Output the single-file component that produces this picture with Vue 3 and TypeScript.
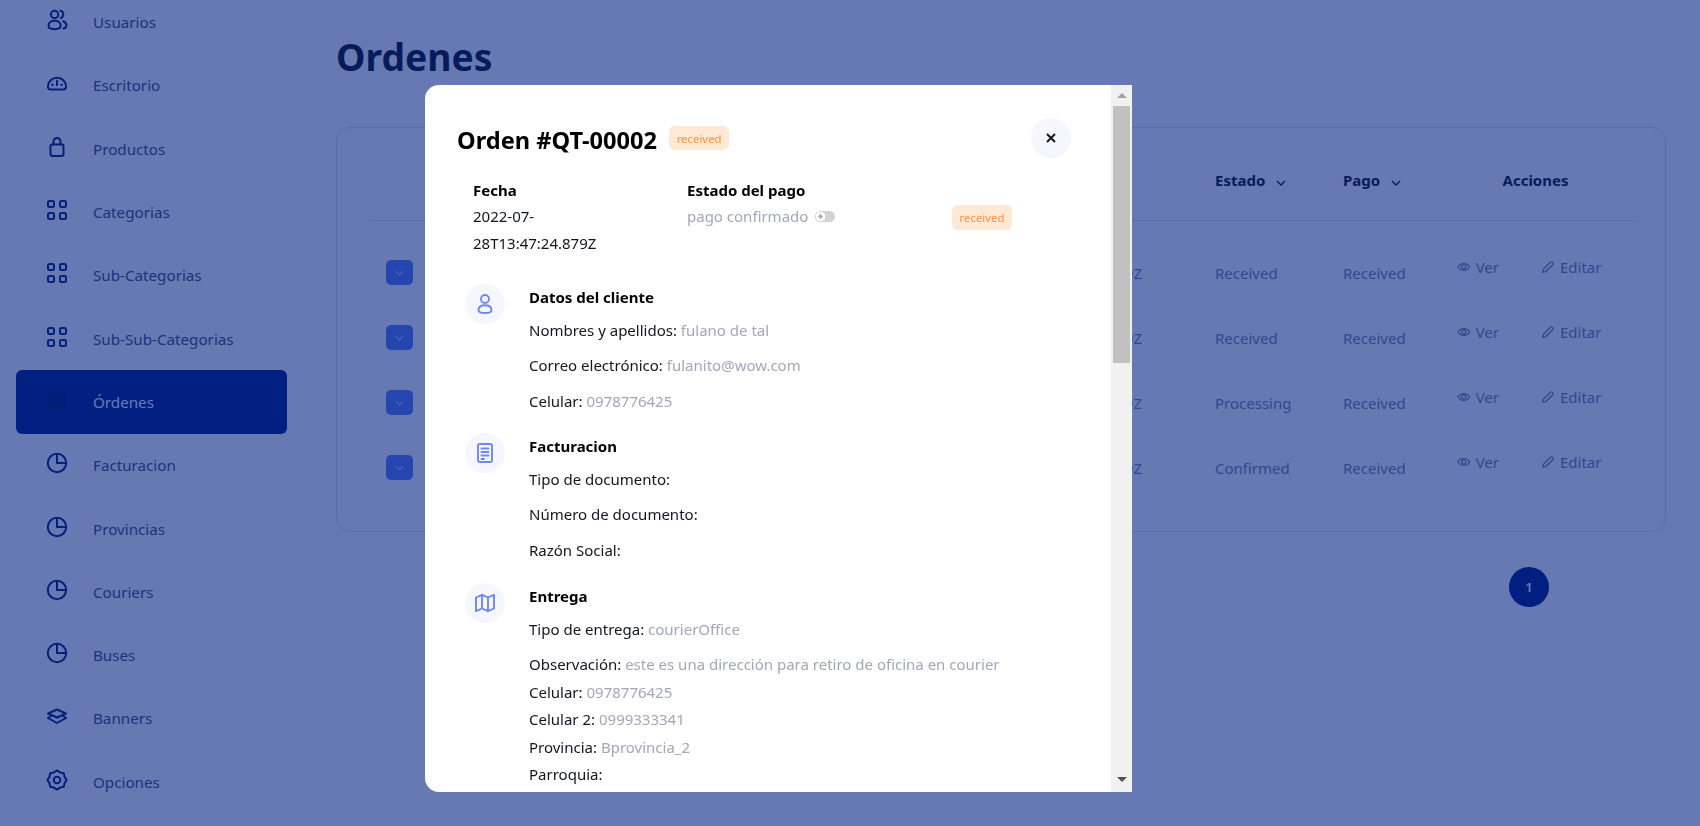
<script setup lang="ts">
const gear = (() => {
  const pts: string[] = []
  for (let i = 0; i < 16; i++) {
    const r = i % 2 === 0 ? 9.6 : 8.2
    const a = (i * Math.PI) / 8 - Math.PI / 2
    pts.push(`${(12 + r * Math.cos(a)).toFixed(2)} ${(12 + r * Math.sin(a)).toFixed(2)}`)
  }
  return 'M' + pts.join('L') + 'Z M12 8.7a3.3 3.3 0 1 1 0 6.6 3.3 3.3 0 0 1 0-6.6z'
})()

const icons: Record<string, string> = {
  users:
    'M9.6 2.8a3.7 3.7 0 1 1 0 7.4 3.7 3.7 0 0 1 0-7.4z M3.500 17.600c0-3 2.700-4.800 6.100-4.800s6.100 1.800 6.100 4.800c0 2.300-1.700 3.600-6.100 3.600s-6.100-1.300-6.100-3.600z M15.300 2.800c1.800.3 3 1.900 3 3.700 0 1.700-1.100 3.100-2.600 3.600 M18.200 13.300c1.900.6 3.200 2 3.200 3.900 0 1.700-1.100 2.900-2.900 3.300',
  gauge:
    'M3 15.800C3 10.400 7 6.800 12 6.800s9 3.600 9 9c0 1.600-.8 2.700-2.500 2.700h-13C3.800 18.500 3 17.400 3 15.800z M12 9.800v4.500 M7 13.800h.8 M16.200 13.800h.8',
  bag:
    'M7 9.500h10a1.500 1.500 0 0 1 1.500 1.500v7.800a2.200 2.200 0 0 1-2.200 2.200H7.700a2.200 2.200 0 0 1-2.200-2.200V11A1.500 1.500 0 0 1 7 9.500z M8.500 9.500V6.500a3.500 3.500 0 0 1 7 0v3',
  grid:
    'M4.500 3h3A1.500 1.500 0 0 1 9 4.500v3A1.500 1.500 0 0 1 7.500 9h-3A1.500 1.500 0 0 1 3 7.500v-3A1.500 1.500 0 0 1 4.500 3z M16.500 3h3A1.500 1.500 0 0 1 21 4.500v3A1.500 1.500 0 0 1 19.500 9h-3A1.500 1.500 0 0 1 15 7.500v-3A1.500 1.500 0 0 1 16.500 3z M4.500 15h3A1.500 1.500 0 0 1 9 16.500v3A1.500 1.500 0 0 1 7.500 21h-3A1.500 1.500 0 0 1 3 19.500v-3A1.500 1.500 0 0 1 4.500 15z M16.500 15h3a1.500 1.500 0 0 1 1.500 1.500v3a1.500 1.500 0 0 1-1.500 1.500h-3a1.500 1.500 0 0 1-1.500-1.500v-3a1.500 1.500 0 0 1 1.500-1.500z',
  doc:
    'M6.800 3h10.400A1.800 1.800 0 0 1 19 4.800v14.400a1.800 1.800 0 0 1-1.800 1.800H6.800A1.800 1.800 0 0 1 5 19.200V4.800A1.800 1.800 0 0 1 6.800 3z M8.500 7.500h7 M8.500 11h7 M8.500 14.500h7 M8.500 18h2.500',
  pie: 'M12 2.800a9.200 9.200 0 1 1 0 18.400 9.200 9.200 0 0 1 0-18.400z M12 2.800V12h9.200',
  layers: 'M12 5.500 21 9.500 12 13.500 3 9.500z M6.500 11.500 3 14l9 5 9-5-3.500-2.500',
  gear,
  person:
    'M12 3a4 4 0 1 1 0 8 4 4 0 0 1 0-8z M5.500 18.200c0-3.400 3-5 6.500-5s6.500 1.600 6.500 5c0 2-1.700 2.800-6.500 2.800s-6.500-.8-6.500-2.800z',
  map:
    'M3 6.500 9 3.800l6 2.700 6-2.700v13.700L15 20.200l-6-2.700-6 2.700z M9 3.800v13.700 M15 6.500v13.700',
}

const menu = [
  { label: 'Usuarios', icon: 'users' },
  { label: 'Escritorio', icon: 'gauge' },
  { label: 'Productos', icon: 'bag' },
  { label: 'Categorias', icon: 'grid' },
  { label: 'Sub-Categorias', icon: 'grid' },
  { label: 'Sub-Sub-Categorias', icon: 'grid' },
  { label: 'Órdenes', icon: 'doc', active: true },
  { label: 'Facturacion', icon: 'pie' },
  { label: 'Provincias', icon: 'pie' },
  { label: 'Couriers', icon: 'pie' },
  { label: 'Buses', icon: 'pie' },
  { label: 'Banners', icon: 'layers' },
  { label: 'Opciones', icon: 'gear' },
]

const orders = [
  { id: 'QT-00001', date: '2022-07-28T13:47:24.879Z', state: 'Received', pay: 'Received' },
  { id: 'QT-00002', date: '2022-07-28T13:47:24.879Z', state: 'Received', pay: 'Received' },
  { id: 'QT-00003', date: '2022-07-28T13:47:24.879Z', state: 'Processing', pay: 'Received' },
  { id: 'QT-00004', date: '2022-07-28T13:47:24.879Z', state: 'Confirmed', pay: 'Received' },
]

const sections = [
  {
    title: 'Datos del cliente',
    icon: 'person',
    rows: [
      { k: 'Nombres y apellidos:', v: 'fulano de tal' },
      { k: 'Correo electrónico:', v: 'fulanito@wow.com' },
      { k: 'Celular:', v: '0978776425' },
    ],
  },
  {
    title: 'Facturacion',
    icon: 'doc',
    rows: [
      { k: 'Tipo de documento:', v: '' },
      { k: 'Número de documento:', v: '' },
      { k: 'Razón Social:', v: '' },
    ],
  },
  {
    title: 'Entrega',
    icon: 'map',
    rows: [
      { k: 'Tipo de entrega:', v: 'courierOffice' },
      { k: 'Observación:', v: 'este es una dirección para retiro de oficina en courier', tight: true },
      { k: 'Celular:', v: '0978776425', tight: true },
      { k: 'Celular 2:', v: '0999333341', tight: true },
      { k: 'Provincia:', v: 'Bprovincia_2', tight: true },
      { k: 'Parroquia:', v: '', tight: true },
    ],
  },
]
</script>

<template>
  <div class="page">
    <aside class="sidebar">
      <a v-for="m in menu" :key="m.label" class="nav" :class="{ active: m.active }">
        <svg class="nav-icon" viewBox="0 0 24 24"><path :d="icons[m.icon]" /></svg>
        <span>{{ m.label }}</span>
      </a>
    </aside>

    <main class="main">
      <h1 class="title">Ordenes</h1>
      <section class="card">
        <div class="thead">
          <div></div>
          <div class="th">Estado <svg class="sort" viewBox="0 0 10 6"><path d="M1 1l4 4 4-4" /></svg></div>
          <div class="th">Pago <svg class="sort" viewBox="0 0 10 6"><path d="M1 1l4 4 4-4" /></svg></div>
          <div class="th center">Acciones</div>
        </div>
        <div v-for="o in orders" :key="o.id" class="tr">
          <div class="first">
            <span class="expand"><svg viewBox="0 0 10 6"><path d="M1 1l4 4 4-4" /></svg></span>
            <span class="date">{{ o.date }}</span>
          </div>
          <div>{{ o.state }}</div>
          <div>{{ o.pay }}</div>
          <div class="actions">
            <span class="act ver">
              <svg viewBox="0 0 16 16">
                <path d="M1 8c1.800-2.800 4.200-4 7-4s5.200 1.200 7 4c-1.800 2.800-4.200 4-7 4s-5.200-1.200-7-4z" />
                <circle cx="8" cy="8" r="2.400" />
              </svg>
              Ver
            </span>
            <span class="act">
              <svg viewBox="0 0 16 16"><path d="M2 14l.8-3.400 7.800-8a1.500 1.500 0 0 1 2.200 0l.6.600a1.500 1.500 0 0 1 0 2.200l-7.900 7.800z" /></svg>
              Editar
            </span>
          </div>
        </div>
      </section>
      <div class="pager"><span class="page-num">1</span></div>
    </main>

    <div class="overlay">
      <div class="modal">
        <div class="body">
          <header class="head">
            <h2>Orden #QT-00002</h2>
            <span class="badge">received</span>
            <button class="close" type="button">
              <svg viewBox="0 0 12 12"><path d="M2 2l8 8M10 2l-8 8" /></svg>
            </button>
          </header>

          <div class="info">
            <div class="col-date">
              <b>Fecha</b>
              <div>2022-07-28T13:47:24.879Z</div>
            </div>
            <div>
              <b>Estado del pago</b>
              <div class="muted pay">pago confirmado <i class="toggle"></i></div>
            </div>
            <div class="badge-cell"><span class="badge big">received</span></div>
          </div>

          <div v-for="s in sections" :key="s.title" class="section">
            <span class="sec-icon">
              <svg viewBox="0 0 24 24"><path :d="icons[s.icon]" /></svg>
            </span>
            <div class="sec-body">
              <h3>{{ s.title }}</h3>
              <p v-for="r in s.rows" :key="r.k" :class="{ tight: r.tight }">
                {{ r.k }} <span class="muted">{{ r.v }}</span>
              </p>
            </div>
          </div>
        </div>

        <div class="scrollbar">
          <span class="arrow up"></span>
          <span class="thumb"></span>
          <span class="arrow down"></span>
        </div>
      </div>
    </div>
  </div>
</template>

<style>
html,
body {
  margin: 0;
  height: 100%;
  overflow: hidden;
  background: #fff;
}
</style>

<style scoped>
.page {
  display: flex;
  height: 826px;
  overflow: hidden;
  font-family: 'Noto Sans', 'Open Sans', sans-serif;
  font-size: 15px;
  color: #131523;
}
.sidebar {
  width: 336px;
  flex: none;
  box-sizing: border-box;
  padding-left: 16px;
  margin-top: -9.5px;
  font-size: 15.2px;
}
.nav {
  display: flex;
  align-items: center;
  width: 271px;
  height: 63.3px;
  box-sizing: border-box;
  padding-left: 29px;
  border-radius: 6px;
  color: #4a5070;
}
.nav.active {
  background: #002080;
  color: #fff;
}
.nav-icon {
  width: 24px;
  height: 24px;
  margin-right: 24px;
  position: relative;
  top: -2px;
  fill: none;
  stroke: #0f1f6e;
  stroke-width: 2;
  stroke-linecap: round;
  stroke-linejoin: round;
}
.nav.active .nav-icon {
  stroke: #0c1c52;
}
.main {
  flex: 1;
  padding-right: 34px;
  min-width: 0;
}
.title {
  margin: 33px 0 0;
  font-size: 37.3px;
  line-height: 48px;
  font-weight: 700;
  color: #131523;
}
.card {
  margin-top: 46px;
  height: 405px;
  box-sizing: border-box;
  border: 1px solid #d9e1ec;
  border-radius: 14px;
  padding: 0 31px 0 33px;
}
.thead,
.tr {
  display: grid;
  grid-template-columns: 845px 128px 114px 1fr;
  align-items: center;
}
.thead {
  height: 93px;
  box-sizing: border-box;
  padding-top: 12px;
  border-bottom: 1px solid #d9e1ec;
  font-weight: 700;
  margin-bottom: 19px;
}
.th {
  display: flex;
  align-items: center;
  color: #131523;
}
.th.center {
  justify-content: center;
  padding-right: 20px;
}
.sort {
  width: 10px;
  height: 6px;
  margin-left: 11px;
  margin-top: 5px;
  fill: none;
  stroke: #131523;
  stroke-width: 1.3;
}
.tr {
  height: 65px;
  color: #7e84a3;
}
.first {
  display: flex;
  align-items: center;
  justify-content: space-between;
  padding: 0 73px 0 16px;
}
.expand {
  width: 27px;
  height: 25px;
  border-radius: 5px;
  background: #5e7ff5;
  display: flex;
  align-items: center;
  justify-content: center;
}
.expand svg {
  width: 9px;
  height: 6px;
  fill: none;
  stroke: #b8c6fa;
  stroke-width: 1.3;
}
.actions {
  display: flex;
  gap: 42px;
  position: relative;
  top: -6px;
}
.act {
  display: inline-flex;
  align-items: center;
  gap: 5px;
}
.act svg {
  width: 14px;
  height: 14px;
  fill: none;
  stroke: #7e84a3;
  stroke-width: 1.5;
}
.ver {
  width: 42px;
}
.pager {
  display: flex;
  justify-content: flex-end;
  padding-right: 117px;
  margin-top: 35px;
}
.page-num {
  width: 40px;
  height: 40px;
  border-radius: 50%;
  background: #002080;
  color: #fff;
  display: flex;
  align-items: center;
  justify-content: center;
  font-size: 13px;
  font-weight: 600;
}
.overlay {
  position: fixed;
  inset: 0;
  background: rgba(0, 32, 128, 0.6);
}
.modal {
  position: absolute;
  left: 425px;
  top: 85px;
  width: 707px;
  height: 707px;
  background: #fff;
  border-radius: 14px 0 0 14px;
  overflow: hidden;
}
.body {
  padding: 33px 40px 0 32px;
  width: 686px;
  box-sizing: border-box;
}
.head {
  display: flex;
  align-items: center;
  height: 40px;
}
.head h2 {
  margin: 3px 0 0;
  font-size: 23.6px;
  font-weight: 700;
  color: #000;
}
.badge {
  display: inline-flex;
  align-items: center;
  justify-content: center;
  margin-left: 12px;
  width: 60px;
  height: 24px;
  border-radius: 6px;
  background: #ffe8d4;
  color: #ff8f3f;
  font-size: 11.4px;
}
.badge.big {
  margin: 0;
  height: 25px;
}
.close {
  margin-left: auto;
  width: 40px;
  height: 40px;
  padding: 0;
  border: 0;
  border-radius: 50%;
  background: #f5f6fe;
  display: flex;
  align-items: center;
  justify-content: center;
}
.close svg {
  width: 12px;
  height: 12px;
  fill: none;
  stroke: #131523;
  stroke-width: 2;
}
.info {
  display: grid;
  grid-template-columns: 214px 265px auto;
  margin: 20px 0 27px 16px;
  line-height: 27px;
}
.info b {
  display: block;
  line-height: 25px;
  font-weight: 700;
  color: #000;
}
.col-date div {
  width: 150px;
}
.badge-cell {
  padding-top: 25px;
}
.pay {
  display: flex;
  align-items: center;
  gap: 7px;
}
.toggle {
  display: block;
  width: 20px;
  height: 11px;
  border-radius: 6px;
  background: #d3d3d3 radial-gradient(circle at 5.5px 5.5px, #b0b0b0 0 2px, #fff 2.200px 4.500px, transparent 4.700px);
}
.muted {
  color: #a3a6bd;
}
.section {
  display: flex;
  gap: 24px;
  margin: 0 0 10px 8px;
}
.section:last-child {
  margin-top: 11px;
}
.sec-icon {
  flex: none;
  width: 40px;
  height: 40px;
  border-radius: 50%;
  background: #f5f6fe;
  display: flex;
  align-items: center;
  justify-content: center;
}
.sec-icon svg {
  width: 24px;
  height: 24px;
  fill: none;
  stroke: #6d88f3;
  stroke-width: 1.9;
  stroke-linecap: round;
  stroke-linejoin: round;
}
.sec-body {
  line-height: 27px;
}
.sec-body h3 {
  margin: 0 0 5.5px;
  font-size: 15px;
  font-weight: 700;
  line-height: 27px;
  color: #000;
}
.sec-body p {
  margin: 0 0 8.5px;
}
.sec-body p.tight {
  margin-bottom: 0;
  line-height: 27.5px;
}
.scrollbar {
  position: absolute;
  right: 0;
  top: 0;
  bottom: 0;
  width: 21px;
  background: #f1f1f1;
  display: flex;
  flex-direction: column;
  align-items: center;
}
.thumb {
  position: absolute;
  top: 21px;
  left: 2px;
  right: 2px;
  height: 257px;
  background: #c1c1c1;
}
.arrow {
  position: absolute;
  width: 0;
  height: 0;
  border-left: 5px solid transparent;
  border-right: 5px solid transparent;
}
.arrow.up {
  top: 8px;
  border-bottom: 5px solid #a3a3a3;
}
.arrow.down {
  bottom: 10px;
  border-top: 5px solid #505050;
}
</style>
